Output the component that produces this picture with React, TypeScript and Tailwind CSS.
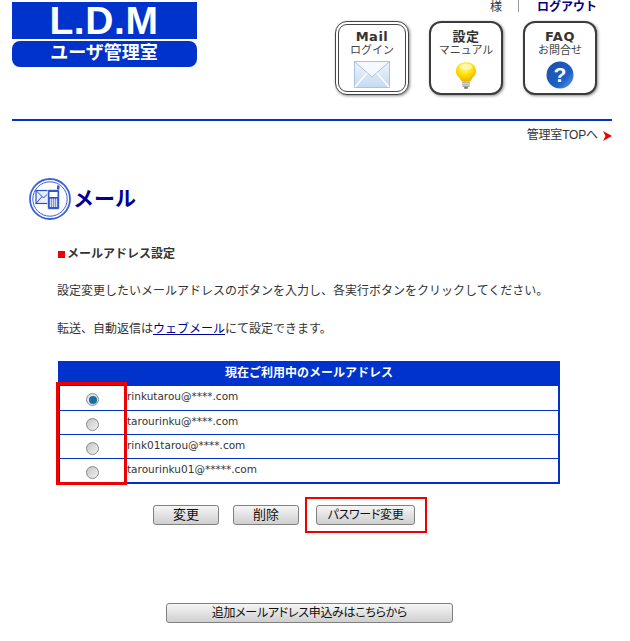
const jp = "font-['Liberation_Sans','Noto_Sans_CJK_JP',sans-serif]";

const addresses = [
  { mail: "rinkutarou@****.com", checked: true },
  { mail: "tarourinku@****.com", checked: false },
  { mail: "rink01tarou@****.com", checked: false },
  { mail: "tarourinku01@*****.com", checked: false },
];

const EnvelopeIcon = () => (
  <svg width="36" height="28" viewBox="0 0 36 28">
    <defs>
      <linearGradient id="env" x1="0" y1="0" x2="0" y2="1">
        <stop offset="0" stopColor="#eef5fd" />
        <stop offset="1" stopColor="#c4daf2" />
      </linearGradient>
    </defs>
    <rect x="0.5" y="0.5" width="35" height="26" fill="url(#env)" stroke="#a9c3e2" />
    <path d="M1 1 L18 16 L35 1" fill="#f4f9fe" stroke="#a9c3e2" />
    <path d="M1 26 L13 12 M35 26 L23 12" fill="none" stroke="#ffffff" strokeWidth="1.5" />
  </svg>
);

const BulbIcon = () => (
  <svg width="22" height="28" viewBox="0 0 24 30">
    <defs>
      <radialGradient id="bulb" cx="0.45" cy="0.3" r="0.7">
        <stop offset="0" stopColor="#fff7a0" />
        <stop offset="0.5" stopColor="#ffe400" />
        <stop offset="1" stopColor="#e8b400" />
      </radialGradient>
    </defs>
    <path d="M12 1 C5 1 1 5.500 1 11 C1 15 4 17 6 20 L7.500 22 L16.500 22 L18 20 C20 17 23 15 23 11 C23 5.500 19 1 12 1 Z" fill="url(#bulb)" />
    <ellipse cx="12" cy="6" rx="7" ry="3.500" fill="#fff9c0" opacity="0.8" />
    <rect x="8" y="22" width="8" height="6" rx="1" fill="#a8a8a0" />
    <path d="M8 24 H16 M8 26 H16" stroke="#e4e4de" />
    <rect x="10" y="28" width="4" height="2" fill="#77776f" />
  </svg>
);

const HelpIcon = () => (
  <svg width="28" height="28" viewBox="0 0 28 28">
    <defs>
      <linearGradient id="help" x1="0" y1="0" x2="1" y2="1">
        <stop offset="0" stopColor="#1c4fa8" />
        <stop offset="0.65" stopColor="#1f5fc8" />
        <stop offset="1" stopColor="#6aa4ee" />
      </linearGradient>
    </defs>
    <circle cx="14" cy="14" r="13.500" fill="url(#help)" />
    <text x="14" y="21" textAnchor="middle" fontSize="21" fontWeight="700" fill="#ffffff" fontFamily="Liberation Sans">?</text>
  </svg>
);

const MailBadge = () => (
  <svg width="42" height="42" viewBox="0 0 42 42">
    <circle cx="21" cy="21" r="20" fill="#ffffff" stroke="#3f62d8" strokeWidth="1.800" />
    <circle cx="21" cy="21" r="17.200" fill="#ffffff" stroke="#3f62d8" strokeWidth="1" />
    <rect x="7" y="12.500" width="15" height="13" fill="#e8eefb" stroke="#2f4fc4" strokeWidth="1.200" />
    <path d="M7 12.500 L14.500 20 L22 12.500 M7 25.500 L13 18.500" fill="none" stroke="#2f4fc4" />
    <rect x="18.500" y="11.500" width="12" height="20" rx="1.500" fill="#3456cc" stroke="#ffffff" strokeWidth="0.600" />
    <rect x="20.500" y="14" width="8" height="5" fill="#ffffff" />
    <path d="M21.500 20.500 V29 M23.500 20.500 V29 M25.500 20.500 V29 M27.500 20.500 V29 M20.500 22 H28.500 M20.500 24 H28.500 M20.500 26 H28.500 M20.500 28 H28.500" stroke="#ffffff" strokeWidth="0.700" />
    <rect x="28" y="7.500" width="2.500" height="4" fill="#3456cc" />
  </svg>
);

const RedArrow = () => (
  <svg width="9" height="10" viewBox="0 0 9 10">
    <path d="M0 0 L9 5 L0 10 L2.500 5 Z" fill="#ee0000" />
  </svg>
);

const NavButton = ({
  title,
  sub,
  double,
  children,
}: {
  title: string;
  sub: string;
  double?: boolean;
  children: React.ReactNode;
}) => (
  <div
    className={`w-[74px] h-[74px] rounded-[12px] bg-white flex flex-col items-center shadow-[1px_1px_3px_rgba(0,0,0,0.45)] ${
      double
        ? "border border-[#444] outline outline-1 -outline-offset-[4px] outline-[#444]"
        : "border-[2px] border-[#3c3c3c]"
    }`}
  >
    <div className={`${double ? "mt-[7px]" : "mt-[6px]"} text-[13px] leading-[15px] font-bold text-[#333] tracking-[0.5px] font-['DejaVu_Sans','Noto_Sans_CJK_JP',sans-serif]`}>
      {title}
    </div>
    <div className={`text-[11px] leading-[12px] text-[#444] ${jp}`}>{sub}</div>
    <div className="mt-[5px] flex justify-center">{children}</div>
  </div>
);

const GrayButton = ({ label, className }: { label: string; className: string }) => (
  <button
    className={`h-[20px] rounded-[3px] border border-[#808080] bg-gradient-to-b from-[#f6f6f6] to-[#cfcfcf] leading-[18px] text-[#111] [font-feature-settings:'palt'] ${jp} ${className}`}
  >
    {label}
  </button>
);

export default function App() {
  return (
    <div className={`relative w-[630px] h-[641px] bg-white text-[12px] text-[#333] ${jp}`}>
      {/* ヘッダー */}
      <div className="flex justify-between pl-[12px] pr-[33px] h-[119px]">
        <div className="w-[185px] pt-[2px]">
          <div className="h-[37px] bg-[#0033cc] text-white text-center font-bold text-[39px] leading-[38px] tracking-[0.6px] pr-[1px]">
            L.D.M
          </div>
          <div className="mt-[2px] h-[26px] rounded-[8px] bg-[#0033cc] text-white text-center font-bold text-[18px] leading-[25px] pr-[1px]">
            ユーザ管理室
          </div>
        </div>
        <div className="w-[262px]">
          <div className="h-[21px] flex items-start text-[12px] leading-[14px] whitespace-nowrap">
            <span className="ml-[155px] w-[29px]">様</span>
            <span className="w-px h-[12px] bg-[#999]" />
            <span className="ml-[18px] font-bold text-[#000080]">ログアウト</span>
          </div>
          <div className="flex gap-[20px]">
            <NavButton title="Mail" sub="ログイン" double>
              <EnvelopeIcon />
            </NavButton>
            <NavButton title="設定" sub="マニュアル">
              <BulbIcon />
            </NavButton>
            <NavButton title="FAQ" sub="お問合せ">
              <HelpIcon />
            </NavButton>
          </div>
        </div>
      </div>
      <div className="ml-[12px] mr-[18px] h-[2px] bg-[#0033cc]" />
      <div className="mt-[7px] mr-[18px] flex justify-end items-center gap-[5px] h-[15px] leading-[15px] [font-feature-settings:'palt'] tracking-[-0.2px]">
        <span>管理室TOPへ</span>
        <RedArrow />
      </div>

      {/* メインタイトル */}
      <div className="mt-[35px] ml-[29px] flex items-center gap-[2px] h-[42px]">
        <MailBadge />
        <h1 className="text-[21px] font-bold text-[#000099]">メール</h1>
      </div>

      <div className="ml-[57px] mt-[27px] flex items-center h-[14px] font-bold leading-[14px]">
        <span className="ml-[1px] mr-[2px] w-[7px] h-[7px] bg-[#ee0000]" />
        メールアドレス設定
      </div>
      <p className="ml-[57px] mt-[23px] leading-[14px]">
        設定変更したいメールアドレスのボタンを入力し、各実行ボタンをクリックしてください。
      </p>
      <p className="ml-[57px] mt-[24px] leading-[14px]">
        転送、自動返信は<span className="text-[#000099] underline">ウェブメール</span>にて設定できます。
      </p>

      {/* メールアドレス一覧 */}
      <div className="relative ml-[58px] mt-[25px] w-[502px]">
        <div className="h-[25px] bg-[#0033cc] text-white font-bold text-[12px] leading-[24px] text-center">
          現在ご利用中のメールアドレス
        </div>
        <div className="border-x-2 border-b-2 border-[#0033cc]">
          {addresses.map((row, i) => (
            <div
              key={row.mail}
              className={`flex h-[24px] ${i > 0 ? "border-t border-[#0033cc]" : ""}`}
            >
              <div className="w-[66px] border-r border-[#0033cc] flex items-center justify-center pt-[3px]">
                <span
                  className={`w-[13px] h-[13px] rounded-full border border-[#8a8a8a] flex items-center justify-center ${
                    row.checked ? "bg-[#d8e4ee]" : "bg-gradient-to-br from-[#c4c4c4] to-[#f2f2f2]"
                  }`}
                >
                  {row.checked && <span className="w-[8px] h-[8px] rounded-full bg-[#1b6fa0]" />}
                </span>
              </div>
              <div className="pl-[1px] text-[10.5px] leading-[20px] font-['DejaVu_Sans',sans-serif]">
                {row.mail}
              </div>
            </div>
          ))}
        </div>
        {/* 赤枠の注釈 */}
        <div className="absolute left-[-2px] top-[21px] w-[71px] h-[103px] border-[3px] border-[#ee0000]" />
      </div>

      <div className="relative flex ml-[153px] mt-[21px]">
        <GrayButton label="変更" className="w-[66px] text-[13px]" />
        <GrayButton label="削除" className="w-[66px] ml-[14px] text-[13px]" />
        <GrayButton label="パスワード変更" className="w-[99px] ml-[17px] text-[12px] tracking-[-0.3px]" />
        <div className="absolute left-[152px] top-[-8px] w-[122px] h-[36px] border-2 border-[#ee0000]" />
      </div>

      <GrayButton
        label="追加メールアドレス申込みはこちらから"
        className="block w-[287px] ml-[166px] mt-[78px] text-[12px] tracking-[-0.3px]"
      />
    </div>
  );
}
